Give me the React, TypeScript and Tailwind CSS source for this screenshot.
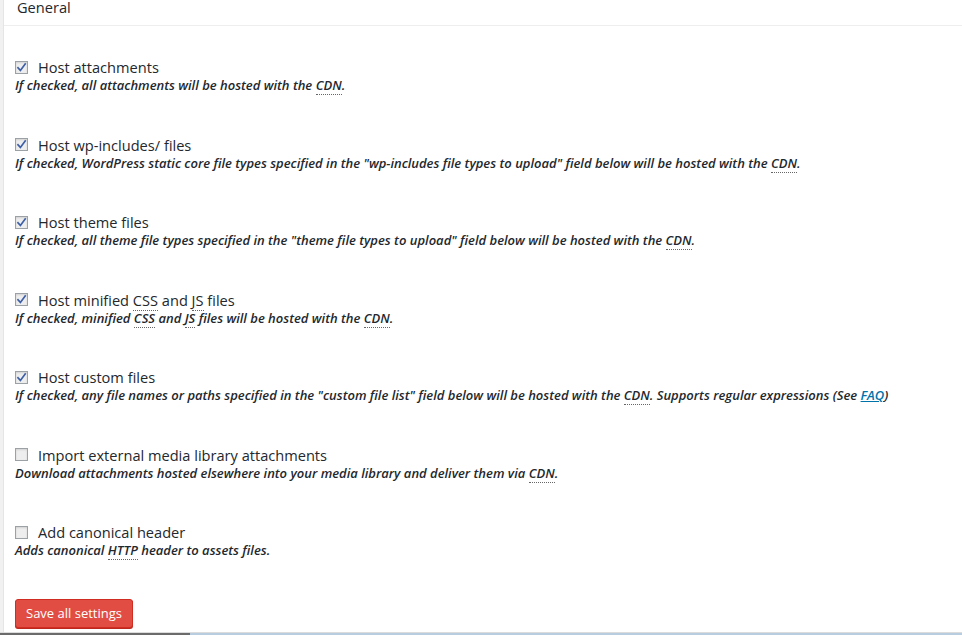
import React from "react";

function Abbr({ children }: { children: React.ReactNode }) {
  return (
    <span className="border-b border-dotted border-[#666]">{children}</span>
  );
}

function Check({ checked }: { checked: boolean }) {
  return (
    <span className="relative inline-block w-[13px] h-[13px] border border-[#9ca1a6] bg-[#eeeeee] shadow-[inset_0_1px_2px_rgba(0,0,0,0.12)] shrink-0">
      {checked && (
        <svg
          viewBox="0 0 13 13"
          className="absolute left-[-1px] top-[-1px] w-[13px] h-[13px]"
        >
          <path
            d="M3 6.8 L5.4 9.4 L10.2 3"
            fill="none"
            stroke="#3d5fa8"
            strokeWidth="1.7"
            strokeLinecap="square"
          />
        </svg>
      )}
    </span>
  );
}

type Item = { label: React.ReactNode; desc: React.ReactNode; checked: boolean };

const items: Item[] = [
  {
    label: "Host attachments",
    desc: (
      <>
        If checked, all attachments will be hosted with the <Abbr>CDN</Abbr>.
      </>
    ),
    checked: true,
  },
  {
    label: "Host wp-includes/ files",
    desc: (
      <>
        If checked, WordPress static core file types specified in the
        "wp-includes file types to upload" field below will be hosted with the{" "}
        <Abbr>CDN</Abbr>.
      </>
    ),
    checked: true,
  },
  {
    label: "Host theme files",
    desc: (
      <>
        If checked, all theme file types specified in the "theme file types to
        upload" field below will be hosted with the <Abbr>CDN</Abbr>.
      </>
    ),
    checked: true,
  },
  {
    label: (
      <>
        Host minified <Abbr>CSS</Abbr> and <Abbr>JS</Abbr> files
      </>
    ),
    desc: (
      <>
        If checked, minified <Abbr>CSS</Abbr> and <Abbr>JS</Abbr> files will be
        hosted with the <Abbr>CDN</Abbr>.
      </>
    ),
    checked: true,
  },
  {
    label: "Host custom files",
    desc: (
      <>
        If checked, any file names or paths specified in the "custom file list"
        field below will be hosted with the <Abbr>CDN</Abbr>. Supports regular
        expressions (See{" "}
        <a href="#" className="text-[#0073aa] underline">
          FAQ
        </a>
        )
      </>
    ),
    checked: true,
  },
  {
    label: "Import external media library attachments",
    desc: (
      <>
        Download attachments hosted elsewhere into your media library and
        deliver them via <Abbr>CDN</Abbr>.
      </>
    ),
    checked: false,
  },
  {
    label: "Add canonical header",
    desc: (
      <>
        Adds canonical <Abbr>HTTP</Abbr> header to assets files.
      </>
    ),
    checked: false,
  },
];

export default function App() {
  return (
    <div
      className="w-[962px] h-[635px] overflow-hidden bg-white flex flex-col text-[#32373c]"
      style={{ fontFamily: '"Open Sans", "Noto Sans", sans-serif' }}
    >
      <div className="flex flex-1 min-h-0">
        <div className="w-[4px] bg-[#f1f1f1] border-r border-[#e5e5e5] shrink-0" />
        <div className="flex-1 flex flex-col min-w-0">
          <div className="h-[26px] border-b border-[#eeeeee] pl-[13px]">
            <h3 className="text-[14.6px] leading-[15px] text-[#23282d] font-medium">
              General
            </h3>
          </div>
          <div className="flex flex-col gap-[41px] pt-[32px] pl-[11px]">
            {items.map((it, i) => (
              <div key={i} className="flex flex-col">
                <label className="flex items-center gap-[10px] h-[18px] text-[14.6px] leading-[18px] font-medium text-[#23282d]">
                  <Check checked={it.checked} />
                  <span>{it.label}</span>
                </label>
                <p className="text-[13px] leading-[18.5px] italic font-semibold text-[#23282d] whitespace-nowrap">
                  {it.desc}
                </p>
              </div>
            ))}
          </div>
          <div className="pt-[39px] pl-[11px]">
            <button className="h-[29px] px-[10px] rounded-[3px] bg-[#e14d43] border border-[#d02c21] text-white text-[13px] leading-[27px] shadow-[0_1px_0_#ba281e]">
              Save all settings
            </button>
          </div>
        </div>
      </div>
      <div className="h-[3px] flex shrink-0 border-t border-[#dcdcdc]">
        <div className="w-[190px] bg-[#6b6b6b]" />
        <div className="flex-1 bg-[#b8cde0]" />
      </div>
    </div>
  );
}
